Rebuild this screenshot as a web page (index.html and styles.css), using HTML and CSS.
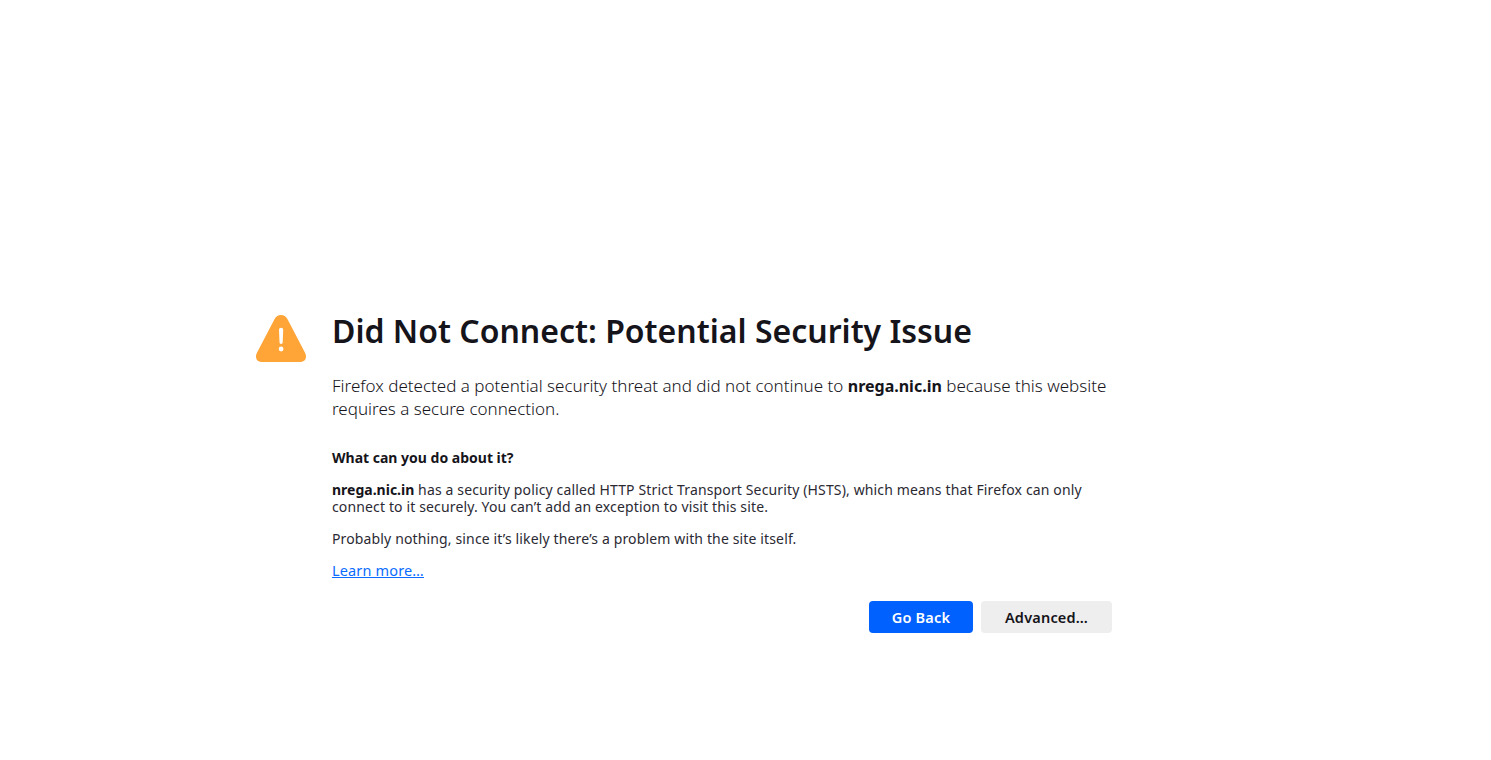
FILE: index.html
```html
<!DOCTYPE html>
<html lang="en">
<head>
<meta charset="utf-8">
<title>Did Not Connect: Potential Security Issue</title>
<link rel="stylesheet" href="styles.css">
</head>
<body>
<div class="page">
  <svg class="warn" viewBox="0 0 50 47" aria-hidden="true">
    <path class="warn-bg" d="M25 0c2.800 0 4.900 1.500 6.400 4L48.900 37.600c.8 1.500 1.100 2.800 1.100 4.200 0 3-2.300 5.200-5.400 5.200H5.400C2.300 47 0 44.800 0 41.800c0-1.400.3-2.700 1.100-4.200L18.600 4C20.100 1.500 22.200 0 25 0z"/>
    <path class="warn-mark" d="M23 14.700c0-1.100.9-1.900 2.100-1.900s2.100.8 2.100 1.900l-.5 12.600c0 .9-.7 1.600-1.600 1.600s-1.600-.7-1.600-1.600z"/>
    <circle class="warn-mark" cx="25.100" cy="34" r="2.400"/>
  </svg>
  <main class="content">
    <h1 class="title">Did Not Connect: Potential Security Issue</h1>
    <p class="intro">Firefox detected a potential security threat and did not continue to <b>nrega.nic.in</b> because this website requires a secure connection.</p>
    <h2 class="sub">What can you do about it?</h2>
    <p class="para"><b>nrega.nic.in</b> has a security policy called HTTP Strict Transport Security (HSTS), which means that Firefox can only connect to it securely. You can’t add an exception to visit this site.</p>
    <p class="para">Probably nothing, since it’s likely there’s a problem with the site itself.</p>
    <a class="learn" href="#">Learn more…</a>
    <div class="actions">
      <button class="btn primary">Go Back</button>
      <button class="btn secondary">Advanced…</button>
    </div>
  </main>
</div>
</body>
</html>
```
FILE: styles.css
```css
* { box-sizing: border-box; }
html, body { margin: 0; height: 100%; background: #fff; }
body { font-family: "Noto Sans", sans-serif; color: #15141a; }
b { font-weight: 700; }
.page { display: flex; align-items: flex-start; gap: 26px; padding: 315px 0 0 256px; }
.warn { width: 50px; height: 47px; flex: none; }
.warn-bg { fill: #ffa436; }
.warn-mark { fill: #fff; }
.content { width: 780px; }
.title { margin: 0; font-size: 32px; line-height: 32px; font-weight: 600; color: #15141a; }
.intro { margin: 27px 0 0; font-size: 17px; line-height: 23px; font-weight: 300; color: #15141a; }
.intro b { font-size: 16px; line-height: 1; }
.sub { margin: 29px 0 0; font-size: 14px; line-height: 17px; font-weight: 700; }
.para { margin: 15px 0 0; font-size: 14px; line-height: 17px; letter-spacing: .14px; color: #2b2a33; }
.para b { color: #15141a; letter-spacing: 0; }
.learn { display: block; width: max-content; margin-top: 15px; font-size: 14.500px; line-height: 17px; letter-spacing: .15px; color: #0a6cff; }
.actions { display: flex; justify-content: flex-end; gap: 8px; margin-top: 22px; }
.btn { height: 32px; padding: 0; border: 0; border-radius: 4px; font-family: inherit; font-size: 14.500px; font-weight: 600; letter-spacing: .2px; }
.primary { width: 104px; background: #0061ff; color: #fff; }
.secondary { width: 131px; background: #eeeeee; color: #15141a; }
```
